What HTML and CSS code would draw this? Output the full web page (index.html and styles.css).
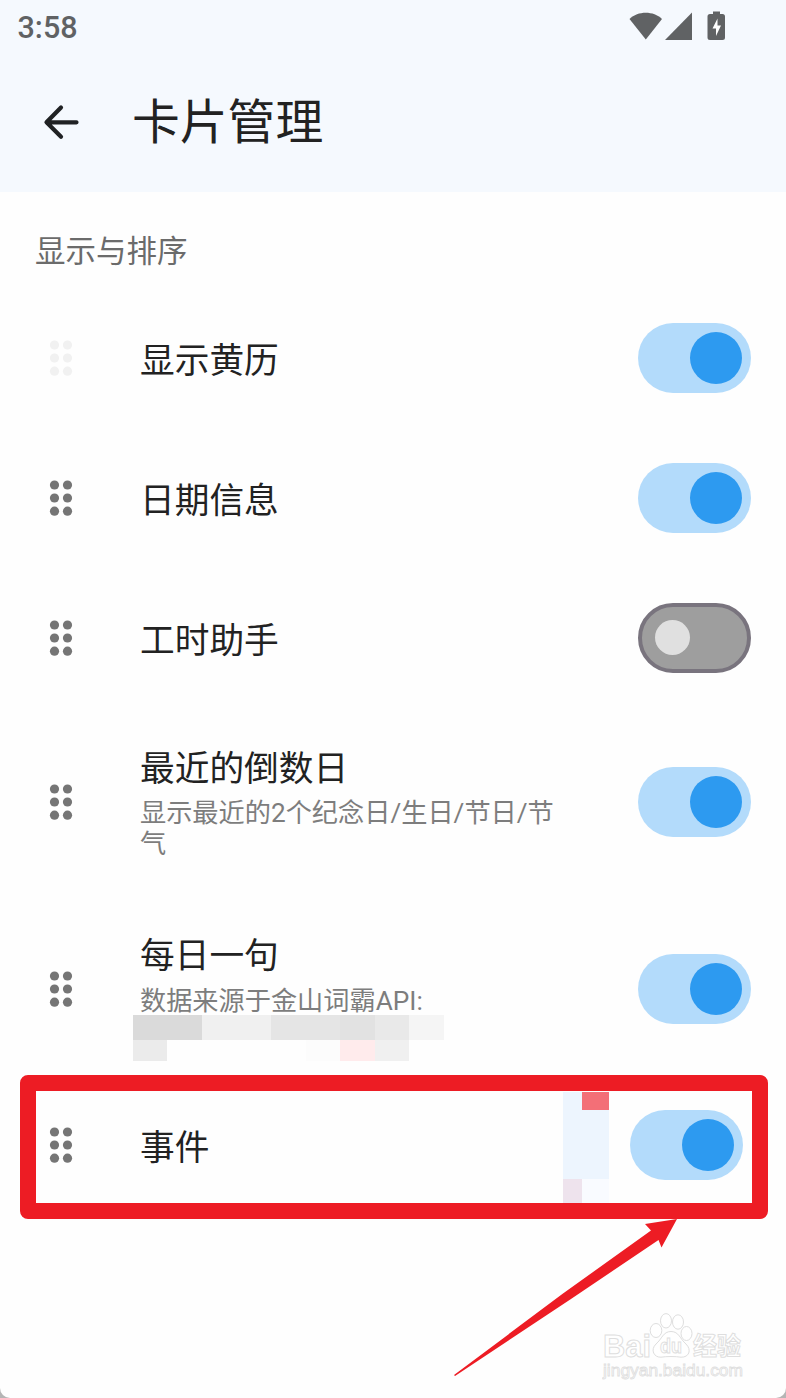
FILE: index.html
```html
<!DOCTYPE html>
<html lang="zh-CN">
<head>
    <meta charset="UTF-8">
    <meta name="viewport" content="width=device-width, initial-scale=1.0">
    <title>卡片管理</title>
    <link rel="stylesheet" href="styles.css">
</head>
<body>
    <svg class="defs" width="0" height="0">
        <symbol id="drag" viewBox="0 0 24 36">
            <circle cx="5.5" cy="5" r="4.6"/><circle cx="18.5" cy="5" r="4.6"/>
            <circle cx="5.5" cy="18" r="4.6"/><circle cx="18.5" cy="18" r="4.6"/>
            <circle cx="5.5" cy="31.2" r="4.6"/><circle cx="18.5" cy="31.2" r="4.6"/>
        </symbol>
    </svg>

    <div class="screen">
        <header class="header">
            <div class="status-bar">
                <span class="time">3:58</span>
                <svg class="status-icons" width="101" height="32" viewBox="0 0 101 32" fill="#606264">
                    <path d="M1.5 9C10 0.8 25.5 0.8 34 9L17.8 29.5z"/>
                    <path d="M64 2.5v27.5H37z"/>
                    <path d="M85 1.5h7V4h2.5a2.5 2.5 0 0 1 2.5 2.5v21a2.5 2.5 0 0 1-2.5 2.5H82a2.5 2.5 0 0 1-2.5-2.5V6.5A2.5 2.5 0 0 1 82 4h3z"/>
                    <path d="M89.5 8.5L84.5 18.5h3.5V26l5-10.5h-3.5z" fill="#fff"/>
                </svg>
            </div>
            <div class="toolbar">
                <svg class="back" width="36" height="36" viewBox="0 0 36 36">
                    <path d="M18 3.5L3.5 18.3l14.5 14.5M4 18.3H33.5" fill="none" stroke="#202224" stroke-width="4.2" stroke-linecap="round" stroke-linejoin="round"/>
                </svg>
                <h1>卡片管理</h1>
            </div>
        </header>

        <main>
            <h2>显示与排序</h2>
            <ul class="list">
                <li class="row">
                    <svg class="drag disabled"><use href="#drag"/></svg>
                    <div class="text"><div class="title">显示黄历</div></div>
                    <span class="switch on"></span>
                </li>
                <li class="row">
                    <svg class="drag"><use href="#drag"/></svg>
                    <div class="text"><div class="title">日期信息</div></div>
                    <span class="switch on"></span>
                </li>
                <li class="row">
                    <svg class="drag"><use href="#drag"/></svg>
                    <div class="text"><div class="title">工时助手</div></div>
                    <span class="switch"></span>
                </li>
                <li class="row tall">
                    <svg class="drag"><use href="#drag"/></svg>
                    <div class="text">
                        <div class="title">最近的倒数日</div>
                        <div class="summary">显示最近的2个纪念日/生日/节日/节气</div>
                    </div>
                    <span class="switch on"></span>
                </li>
                <li class="row tall">
                    <svg class="drag"><use href="#drag"/></svg>
                    <div class="text">
                        <div class="title">每日一句</div>
                        <div class="summary masked">数据来源于金山词霸API:</div>
                    </div>
                    <span class="switch on"></span>
                    <!-- pixelated address -->
                    <svg class="mosaic-link" width="311" height="46" shape-rendering="crispEdges">
                        <rect width="69" height="25" fill="#dadada"/>
                        <rect x="69" width="69" height="25" fill="#f0f0f0"/>
                        <rect x="138" width="69" height="25" fill="#e5e5e5"/>
                        <rect x="207" width="35" height="25" fill="#e2e2e2"/>
                        <rect x="242" width="34" height="25" fill="#e9e9e9"/>
                        <rect x="276" width="35" height="25" fill="#f5f5f5"/>
                        <rect y="25" width="34" height="21" fill="#ebebeb"/>
                        <rect x="173" y="25" width="34" height="21" fill="#fcfcfc"/>
                        <rect x="207" y="25" width="35" height="21" fill="#ffebec"/>
                        <rect x="242" y="25" width="34" height="21" fill="#f0f0f0"/>
                    </svg>
                </li>
                <li class="row last">
                    <svg class="drag"><use href="#drag"/></svg>
                    <div class="text"><div class="title">事件</div></div>
                    <svg class="mosaic-side" width="46" height="111" shape-rendering="crispEdges">
                        <rect width="46" height="87" fill="#edf5fe"/>
                        <rect x="19" width="27" height="18" fill="#f36f77"/>
                        <rect y="87" width="19" height="24" fill="#eee3ed"/>
                        <rect x="19" y="87" width="27" height="24" fill="#f9fbff"/>
                    </svg>
                    <span class="switch on"></span>
                </li>
            </ul>
        </main>

        <div class="highlight"></div>
        <svg class="arrow" width="226" height="160" viewBox="0 0 226 160">
            <path d="M1 156L110 74.500 198 11.500 192 5 224 0 208.500 28.500 205.500 21 118 80 2 157z" fill="#ed1c24"/>
        </svg>

        <svg class="watermark" width="150" height="76" viewBox="0 0 150 76">
            <g fill="#fff" stroke="#dedede" stroke-width="1">
                <text x="1" y="46.5" class="wm-name" textLength="48" lengthAdjust="spacingAndGlyphs">Bai</text>
                <ellipse cx="54" cy="20.5" rx="5.8" ry="7"/>
                <ellipse cx="64" cy="10.8" rx="5.5" ry="7.2"/>
                <ellipse cx="76" cy="12" rx="5.5" ry="7.2"/>
                <ellipse cx="84.5" cy="23.5" rx="5.5" ry="7"/>
                <path d="M69 21.5C61 21.5 60 29 54 34C48 40 52 47.5 59 47.2C64 46.3 74 46.3 79 47.2C87 47.5 90 40 84 34C78 29 77 21.5 69 21.5z"/>
                <text x="58" y="42.5" class="wm-du" textLength="22" lengthAdjust="spacingAndGlyphs">du</text>
                <text x="91" y="45" class="wm-cn" textLength="48" lengthAdjust="spacingAndGlyphs">经验</text>
                <text x="1" y="65.5" class="wm-url" textLength="140" lengthAdjust="spacingAndGlyphs">jingyan.baidu.com</text>
            </g>
        </svg>
    </div>
</body>
</html>
```
FILE: styles.css
```css
* {
    box-sizing: border-box;
}
body {
    margin: 0;
    background-color: #b5b5b5;
    font-family: Roboto, "Noto Sans CJK SC", sans-serif;
    color: #222;
}
.defs {
    position: absolute;
}
.screen {
    position: relative;
    width: 786px;
    height: 1398px;
    background-color: #fefefe;
    border-radius: 0 0 10px 10px;
    overflow: hidden;
}
.header {
    height: 192px;
    background-color: #f5f9fe;
}
.status-bar {
    display: flex;
    justify-content: space-between;
    height: 52px;
    padding: 10px 57px 0 17.5px;
}
.time {
    font-size: 30.5px;
    font-weight: 500;
    line-height: 36px;
    color: #606264;
}
.toolbar {
    display: flex;
    align-items: center;
    gap: 53px;
    height: 140px;
    padding-left: 43px;
}
h1 {
    margin: 0;
    padding-top: 2px;
    font-size: 47.8px;
    font-weight: 400;
    line-height: 60px;
}
h2 {
    margin: 0;
    padding: 42px 0 0 35px;
    height: 96px;
    font-size: 30.5px;
    font-weight: 400;
    line-height: 36px;
    color: #6b6b6b;
}
.list {
    margin: 0;
    padding: 0;
    list-style: none;
}
.row {
    position: relative;
    display: flex;
    align-items: center;
    height: 140px;
    padding: 0 35px 0 49px;
}
.row.tall {
    height: 187.6px;
}
.row.last {
    height: 123.8px;
    padding-right: 43.5px;
}
.drag {
    width: 24px;
    height: 36px;
    margin-right: 67px;
    fill: #757575;
}
.drag.disabled {
    fill: #f1f1f1;
}
.text {
    width: 428px;
    padding-top: 6px;
}
.tall .text {
    padding-top: 5px;
}
.title {
    font-size: 34.7px;
    line-height: 41px;
}
.summary {
    margin-top: 8.5px;
    font-size: 26.2px;
    line-height: 31px;
    color: #7d7d7d;
}
.summary.masked {
    height: 62px;
}
.switch {
    width: 113px;
    height: 70px;
    margin-left: auto;
    padding: 13px;
    border: 4px solid #79747e;
    border-radius: 35px;
    background-color: #9e9e9e;
}
.switch::before {
    content: "";
    display: block;
    width: 35px;
    height: 35px;
    border-radius: 50%;
    background-color: #e0e0e0;
}
.switch.on {
    padding: 9px;
    border: none;
    background-color: #b3dbfb;
}
.switch.on::before {
    width: 52px;
    height: 52px;
    margin-left: auto;
    background-color: #2d9af0;
}
.mosaic-link {
    position: absolute;
    left: 133px;
    top: 119.4px;
}
.mosaic-side {
    position: absolute;
    left: 563px;
    top: 8.8px;
}
/* annotations drawn over the list */
.highlight {
    position: absolute;
    left: 20px;
    top: 1075px;
    width: 748px;
    height: 144px;
    border-radius: 8px;
    border: 16px solid #ed1c24;
}
.arrow {
    position: absolute;
    left: 453px;
    top: 1219px;
}
.watermark {
    position: absolute;
    left: 602px;
    top: 1310px;
}
.wm-name {
    font: bold 32px "Liberation Sans", sans-serif;
}
.wm-du {
    font: bold 21px "Liberation Sans", sans-serif;
}
.wm-cn {
    font: bold 25px "Noto Sans CJK SC", sans-serif;
}
.wm-url {
    font: 16px "Liberation Sans", sans-serif;
    stroke-width: 0.8px;
}
```
